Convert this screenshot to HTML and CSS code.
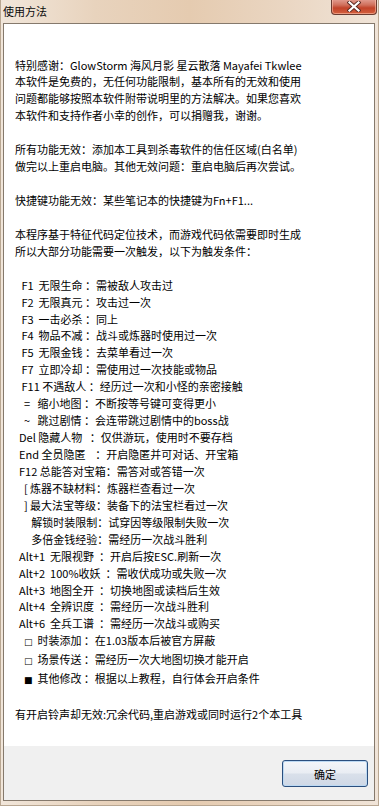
FILE: index.html
```html
<!DOCTYPE html>
<html lang="zh-CN">
<head>
<meta charset="utf-8">
<title>使用方法</title>
<link rel="stylesheet" href="styles.css">
</head>
<body>
<div class="window">
  <div class="titlebar">
    <span class="title">使用方法</span>
    <button class="close" aria-label="关闭">
      <svg width="14" height="11" viewBox="0 0 14 11">
        <path d="M2.5 1.5 L11.5 9.5 M11.5 1.5 L2.5 9.5" stroke="#5a2a22" stroke-width="4" stroke-linecap="square" fill="none"/>
        <path d="M2.5 1.5 L11.5 9.5 M11.5 1.5 L2.5 9.5" stroke="#ffffff" stroke-width="2.2" stroke-linecap="square" fill="none"/>
      </svg>
    </button>
  </div>
  <div class="client">
    <div class="message">
      <p>特别感谢：GlowStorm 海风月影 星云散落 Mayafei Tkwlee<br>本软件是免费的，无任何功能限制，基本所有的无效和使用<br>问题都能够按照本软件附带说明里的方法解决。如果您喜欢<br>本软件和支持作者小幸的创作，可以捐赠我，谢谢。</p>
      <p>所有功能无效：添加本工具到杀毒软件的信任区域(白名单)<br>做完以上重启电脑。其他无效问题：重启电脑后再次尝试。</p>
      <p>快捷键功能无效：某些笔记本的快捷键为Fn+F1...</p>
      <p>本程序基于特征代码定位技术，而游戏代码依需要即时生成<br>所以大部分功能需要一次触发，以下为触发条件：</p>
      <div class="list">
        <div class="row"> F1  无限生命 ：需被敌人攻击过</div>
        <div class="row"> F2  无限真元 ：攻击过一次</div>
        <div class="row"> F3  一击必杀 ：同上</div>
        <div class="row"> F4  物品不减 ：战斗或炼器时使用过一次</div>
        <div class="row"> F5  无限金钱 ：去菜单看过一次</div>
        <div class="row"> F7  立即冷却 ：需使用过一次技能或物品</div>
        <div class="row"> F11 不遇敌人 ：经历过一次和小怪的亲密接触</div>
        <div class="row">  =   缩小地图 ：不断按等号键可变得更小</div>
        <div class="row">  ~   跳过剧情 ：会连带跳过剧情中的boss战</div>
        <div class="row">Del 隐藏人物   ：仅供游玩，使用时不要存档</div>
        <div class="row">End 全员隐匿    ：开启隐匿并可对话、开宝箱</div>
        <div class="row">F12 总能答对宝箱：需答对或答错一次</div>
        <div class="row">  [ 炼器不缺材料：炼器栏查看过一次</div>
        <div class="row">  ] 最大法宝等级：装备下的法宝栏看过一次</div>
        <div class="row">     解锁时装限制：试穿因等级限制失败一次</div>
        <div class="row">     多倍金钱经验：需经历一次战斗胜利</div>
        <div class="row">Alt+1  无限视野  ：开启后按ESC.刷新一次</div>
        <div class="row">Alt+2  100%收妖  ：需收伏成功或失败一次</div>
        <div class="row">Alt+3  地图全开  ：切换地图或读档后生效</div>
        <div class="row">Alt+4  全辨识度  ：需经历一次战斗胜利</div>
        <div class="row">Alt+6  全兵工谱  ：需经历一次战斗或购买</div>
        <div class="row">  <span class="box">□</span>  时装添加 ：在1.03版本后被官方屏蔽</div>
        <div class="row">  <span class="box">□</span>  场景传送 ：需经历一次大地图切换才能开启</div>
        <div class="row">  <span class="box">■</span>  其他修改 ：根据以上教程，自行体会开启条件</div>
      </div>
      <p>有开启铃声却无效:冗余代码,重启游戏或同时运行2个本工具</p>
    </div>
    <div class="footer">
      <button class="ok">确定</button>
    </div>
  </div>
</div>
</body>
</html>
```
FILE: styles.css
```css
html, body {
  margin: 0;
  padding: 0;
}

body {
  width: 379px;
  height: 806px;
  overflow: hidden;
  font-family: "Noto Sans CJK SC", sans-serif;
  font-size: 11px;
  color: #000;
}

.window {
  height: 806px;
  display: flex;
  flex-direction: column;
  box-sizing: border-box;
  background: linear-gradient(90deg, #f1e6da 0%, #e8d3bd 25%, #e5cbb0 50%, #ead6c2 75%, #f0e4d8 100%);
  border-left: 1px solid #b9a792;
  border-right: 1px solid #b9a792;
  border-bottom: 1px solid #b9a792;
}

.titlebar {
  height: 23px;
  flex: none;
  display: flex;
  align-items: flex-start;
  justify-content: space-between;
  padding-left: 2px;
}

.title {
  font-size: 11px;
  line-height: 14px;
  margin-top: 4px;
  color: #0a0a0a;
}

.close {
  width: 46px;
  height: 16px;
  margin: -1px 1px 0 0;
  padding: 0;
  border: 1px solid #6a3b31;
  border-top: none;
  border-radius: 0 0 4px 4px;
  background: linear-gradient(180deg, #e3a094 0%, #d0705c 40%, #c2432a 60%, #d4613e 100%);
  box-shadow: inset 0 0 0 1px rgba(255, 200, 180, 0.55);
  display: flex;
  align-items: center;
  justify-content: center;
}

.close svg {
  display: block;
}

.client {
  flex: 1;
  display: flex;
  flex-direction: column;
  margin: 0 3px 4px 2px;
  border: 1px solid #85796c;
  background: #fff;
}

.message {
  flex: 1;
  padding: 32.5px 0 0 11px;
  line-height: 16.93px;
  white-space: nowrap;
}

.message p {
  margin: 0 0 16.93px 0;
}

.list {
  margin: 0 0 16.93px 0;
  padding-left: 4px;
}

.row {
  white-space: pre;
}

.box {
  font-family: "DejaVu Sans", sans-serif;
  font-size: 9px;
}

.footer {
  height: 54px;
  flex: none;
  background: #f0f0f0;
  display: flex;
  justify-content: flex-end;
  align-items: flex-start;
  padding: 14px 6px 0 0;
  box-sizing: border-box;
}

.ok {
  width: 86px;
  height: 27px;
  border: 1px solid #2b4f7e;
  border-radius: 3px;
  background: linear-gradient(180deg, #f4f6f9 0%, #e9edf3 48%, #d9e0ea 52%, #cfd8e6 100%);
  box-shadow: inset 0 0 0 1px #bcd9f3;
  font-family: "Noto Sans CJK SC", sans-serif;
  font-size: 11px;
  color: #000;
  padding: 0;
}
```
